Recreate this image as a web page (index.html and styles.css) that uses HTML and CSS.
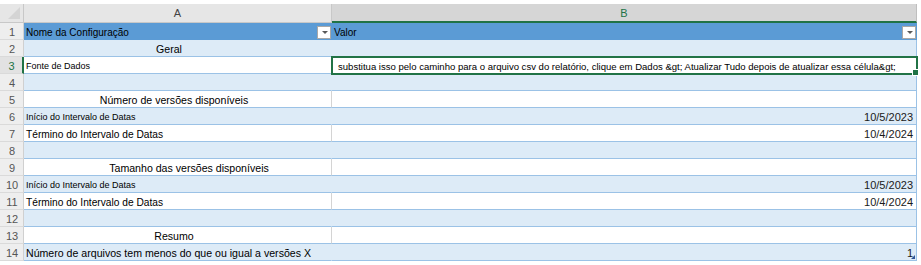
FILE: index.html
```html
<!DOCTYPE html>
<html lang="pt">
<head>
<meta charset="utf-8">
<title>Configuração</title>
<link rel="stylesheet" href="styles.css">
</head>
<body>
<div class="sheet">
  <div class="row colhead">
    <div class="corner"><span class="tri"></span></div>
    <div class="ch">A</div>
    <div class="ch ch-sel">B</div>
  </div>

  <div class="row thead">
    <div class="rh">1</div>
    <div class="c c-a">Nome da Configuração<span class="dd"></span></div>
    <div class="c c-b">Valor<span class="dd"></span></div>
  </div>

  <div class="row band">
    <div class="rh">2</div>
    <div class="c c-a t-title center nudge-l8">Geral</div>
    <div class="c c-b"></div>
  </div>

  <div class="row plain">
    <div class="rh rh-sel">3</div>
    <div class="c c-a t-xs">Fonte de Dados</div>
    <div class="c c-b active t-long">substitua isso pelo caminho para o arquivo csv do relatório, clique em Dados &amp;gt; Atualizar Tudo depois de atualizar essa célula&amp;gt;</div>
  </div>

  <div class="row band">
    <div class="rh">4</div>
    <div class="c c-a"></div>
    <div class="c c-b"></div>
  </div>

  <div class="row plain">
    <div class="rh">5</div>
    <div class="c c-a t-title center nudge-l3">Número de versões disponíveis</div>
    <div class="c c-b"></div>
  </div>

  <div class="row band">
    <div class="rh">6</div>
    <div class="c c-a t-xs">Início do Intervalo de Datas</div>
    <div class="c c-b num">10/5/2023</div>
  </div>

  <div class="row plain">
    <div class="rh">7</div>
    <div class="c c-a t-sm">Término do Intervalo de Datas</div>
    <div class="c c-b num">10/4/2024</div>
  </div>

  <div class="row band">
    <div class="rh">8</div>
    <div class="c c-a"></div>
    <div class="c c-b"></div>
  </div>

  <div class="row plain">
    <div class="rh">9</div>
    <div class="c c-a t-title center shift">Tamanho das versões disponíveis</div>
    <div class="c c-b"></div>
  </div>

  <div class="row band">
    <div class="rh">10</div>
    <div class="c c-a t-xs">Início do Intervalo de Datas</div>
    <div class="c c-b num">10/5/2023</div>
  </div>

  <div class="row plain">
    <div class="rh">11</div>
    <div class="c c-a t-sm">Término do Intervalo de Datas</div>
    <div class="c c-b num">10/4/2024</div>
  </div>

  <div class="row band">
    <div class="rh">12</div>
    <div class="c c-a"></div>
    <div class="c c-b"></div>
  </div>

  <div class="row plain">
    <div class="rh">13</div>
    <div class="c c-a t-title center nudge-l3">Resumo</div>
    <div class="c c-b"></div>
  </div>

  <div class="row band">
    <div class="rh">14</div>
    <div class="c c-a t-title">Número de arquivos tem menos do que ou igual a versões X</div>
    <div class="c c-b num">1<span class="mark"></span></div>
  </div>
</div>
</body>
</html>
```

FILE: styles.css
```css
* { box-sizing: border-box; }

html, body {
  margin: 0;
  padding: 0;
  background: #ffffff;
}

body {
  font-family: "Liberation Sans", Arial, sans-serif;
  color: #000;
}

.sheet {
  padding-top: 4px;
  width: 921px;
}

.row {
  display: grid;
  grid-template-columns: 24px 308px 585px;
  height: 17px;
}

/* column header row */
.colhead {
  height: 19px;
}

.corner {
  background: #e6e6e6;
  border-right: 1px solid #c8c8c8;
  border-bottom: 1px solid #c8c8c8;
  position: relative;
}

.tri {
  position: absolute;
  right: 3px;
  bottom: 3px;
  width: 0;
  height: 0;
  border-left: 12px solid transparent;
  border-bottom: 12px solid #d4d4d4;
}

.ch {
  background: #e6e6e6;
  border-right: 1px solid #c8c8c8;
  border-bottom: 1px solid #c8c8c8;
  font-size: 11px;
  color: #444;
  display: flex;
  align-items: center;
  justify-content: center;
}

.ch-sel {
  background: #d6d6d6;
  color: #217346;
  border-bottom: 2px solid #217346;
  border-right: 1px solid #bfbfbf;
}

/* row headers */
.rh {
  background: #eeeeee;
  border-right: 1px solid #d0d0d0;
  border-bottom: 1px solid #dadada;
  font-size: 11px;
  color: #555;
  display: flex;
  align-items: center;
  justify-content: center;
  padding-left: 1px;
  padding-top: 1px;
}

.rh-sel {
  color: #217346;
  background: #e2e2e2;
  border-right: 2px solid #217346;
}

/* cells */
.c {
  position: relative;
  display: flex;
  align-items: center;
  padding: 2px 3px 0 2px;
  white-space: nowrap;
  font-size: 10px;
  border-bottom: 1px solid #9bc2e6;
}

.c-a { border-right: 1px solid transparent; }
.c-b { border-right: 1px solid #9bc2e6; }

.thead .c {
  background: #5b9bd5;
  border-bottom: 1px solid #5b9bd5;
}
.thead .c-b { border-right-color: #5b9bd5; }
.thead .c-a { border-right-color: #5b9bd5; }

.band .c { background: #ddebf7; }
.band .c-a { border-right-color: #ddebf7; }

.plain .c { background: #ffffff; }
.plain .c-a { border-right-color: #d4d4d4; }

.center { justify-content: center; }
.shift { padding-left: 26px; }
.nudge-l8 { padding-right: 19px; }
.nudge-l3 { padding-right: 9px; }

.t-title { font-size: 10.6px; }
.t-sm { font-size: 10.2px; }
.t-xs { font-size: 9px; }
.t-long { font-size: 9.55px; }

.num {
  justify-content: flex-end;
  font-size: 11px;
  color: #1a1a1a;
  padding-right: 3px;
}

.active {
  padding-left: 6px;
  outline: 2px solid #217346;
  outline-offset: -1px;
  z-index: 2;
}

.active::after {
  content: "";
  position: absolute;
  right: -3px;
  bottom: -3px;
  width: 5px;
  height: 5px;
  background: #217346;
  border: 1px solid #fff;
}

.dd {
  position: absolute;
  right: 0;
  top: 3px;
  width: 14px;
  height: 13px;
  background: #ffffff;
  border: 1px solid #a8a8a8;
}

.dd::after {
  content: "";
  position: absolute;
  left: 4px;
  top: 4px;
  border-left: 3px solid transparent;
  border-right: 3px solid transparent;
  border-top: 3px solid #595959;
}

.mark {
  position: absolute;
  right: 1px;
  bottom: 1px;
  width: 0;
  height: 0;
  border-left: 4px solid transparent;
  border-bottom: 4px solid #2f5597;
}
```
